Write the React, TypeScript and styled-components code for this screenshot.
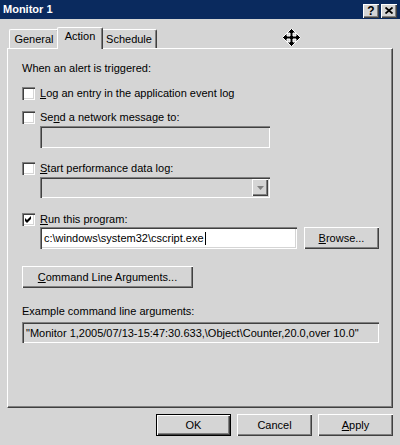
import React from "react";
import styled, { createGlobalStyle, css } from "styled-components";

const face = "#d5d5d5";
const shadow = "#808080";
const darkShadow = "#404040";
const light = "#ffffff";

const GlobalStyle = createGlobalStyle`
  html, body {
    margin: 0;
    padding: 0;
    background: ${face};
  }
  body {
    font-family: "Liberation Sans", Arial, sans-serif;
    font-size: 11px;
    color: #000;
  }
`;

const raised = css`
  box-shadow: inset 1px 1px ${light}, inset -1px -1px ${darkShadow},
    inset -2px -2px ${shadow};
`;

const sunken = css`
  box-shadow: inset 1px 1px ${shadow}, inset 2px 2px ${darkShadow},
    inset -1px -1px ${light}, inset -2px -2px ${face};
`;

export default function App() {
  return (
    <Window>
      <GlobalStyle />
      <TitleBar>
        <Title>Monitor 1</Title>
        <TitleButtons>
          <TitleButton>?</TitleButton>
          <TitleButton>
            <svg width="8" height="7" viewBox="0 0 8 7">
              <path d="M0.5 0.5 L7.5 6.5 M7.5 0.5 L0.5 6.5" stroke="#000" strokeWidth="1.8" />
            </svg>
          </TitleButton>
        </TitleButtons>
      </TitleBar>

      <TabStrip>
        <Tab $w={50}>General</Tab>
        <Tab $w={42} $active>Action</Tab>
        <Tab $w={56}>Schedule</Tab>
      </TabStrip>

      <Panel>
        <Heading>When an alert is triggered:</Heading>

        <CheckRow $top={12}>
          <CheckBox />
          <Label><u>L</u>og an entry in the application event log</Label>
        </CheckRow>

        <CheckRow $top={11}>
          <CheckBox />
          <Label>Se<u>n</u>d a network message to:</Label>
        </CheckRow>
        <Field $w={230} $h={22} $top={2} $indent disabled />

        <CheckRow $top={14}>
          <CheckBox />
          <Label><u>S</u>tart performance data log:</Label>
        </CheckRow>
        <Combo>
          <ComboArrow>
            <svg width="7" height="4" viewBox="0 0 7 4">
              <path d="M0 0 H7 L3.5 4 Z" fill={shadow} />
            </svg>
          </ComboArrow>
        </Combo>

        <CheckRow $top={15}>
          <CheckBox>
            <svg width="7" height="7" viewBox="0 0 7 7">
              <path d="M0 2 L2 4 L6 0 L6 3 L2 7 L0 5 Z" fill="#000" />
            </svg>
          </CheckBox>
          <Label><u>R</u>un this program:</Label>
        </CheckRow>
        <ProgramRow>
          <Field $w={257} $h={22}>
            c:\windows\system32\cscript.exe<Caret />
          </Field>
          <Button $w={75}><u>B</u>rowse...</Button>
        </ProgramRow>

        <CommandButton $w={171}>
          <u>C</u>ommand Line Arguments...
        </CommandButton>

        <ExampleLabel>Example command line arguments:</ExampleLabel>
        <Field $w={357} $h={21} $top={4} disabled>
          "Monitor 1,2005/07/13-15:47:30.633,\Object\Counter,20.0,over 10.0"
        </Field>
      </Panel>

      <ButtonBar>
        <Button $w={75} $default>OK</Button>
        <Button $w={75}>Cancel</Button>
        <Button $w={75}><u>A</u>pply</Button>
      </ButtonBar>

      <MoveCursor width="19" height="19" viewBox="0 0 19 19">
        <path
          d="M9.5 0.5 L14 5 H11 V8 H14 V5 L18.5 9.5 L14 14 V11 H11 V14 H14 L9.5 18.5 L5 14 H8 V11 H5 V14 L0.5 9.5 L5 5 V8 H8 V5 H5 Z"
          fill="#000"
          stroke="#fff"
          strokeWidth="1"
          strokeLinejoin="miter"
        />
      </MoveCursor>
    </Window>
  );
}

const Window = styled.div`
  position: relative;
  width: 400px;
  height: 445px;
  overflow: hidden;
  background: ${face};
  display: flex;
  flex-direction: column;
`;

const TitleBar = styled.div`
  height: 19px;
  background: #0a2a5e;
  display: flex;
  align-items: center;
  justify-content: space-between;
  padding: 0 3px 0 3px;
`;

const Title = styled.div`
  color: #fff;
  font-weight: bold;
  font-size: 11px;
  line-height: 13px;
`;

const TitleButtons = styled.div`
  display: flex;
  gap: 2px;
  margin-top: 3px;
`;

const TitleButton = styled.div`
  width: 16px;
  height: 14px;
  background: ${face};
  ${raised};
  display: flex;
  align-items: center;
  justify-content: center;
  font-weight: bold;
  font-size: 12px;
  line-height: 14px;
  padding-bottom: 1px;
  box-sizing: border-box;
`;

const TabStrip = styled.div`
  display: flex;
  align-items: flex-end;
  height: 21px;
  margin-top: 8px;
  padding-left: 9px;
`;

const Tab = styled.div<{ $w: number; $active?: boolean }>`
  box-sizing: border-box;
  width: ${(p) => p.$w + (p.$active ? 4 : 0)}px;
  height: ${(p) => (p.$active ? 22 : 19)}px;
  margin: 0 ${(p) => (p.$active ? -2 : 0)}px ${(p) => (p.$active ? -1 : 0)}px;
  position: relative;
  z-index: ${(p) => (p.$active ? 1 : 0)};
  background: ${face};
  border-top: 1px solid ${light};
  border-left: 1px solid ${light};
  border-right: 1px solid ${darkShadow};
  border-radius: 2px 2px 0 0;
  box-shadow: inset -1px 0 ${shadow};
  padding-top: ${(p) => (p.$active ? 2 : 3)}px;
  line-height: 13px;
  text-align: center;
`;

const Panel = styled.div`
  box-sizing: border-box;
  margin: 0 7px;
  height: 360px;
  border-top: 1px solid ${light};
  border-left: 1px solid ${light};
  border-right: 1px solid ${darkShadow};
  border-bottom: 1px solid ${darkShadow};
  box-shadow: inset -1px -1px ${shadow};
  padding: 13px 0 0 14px;
  display: flex;
  flex-direction: column;
  align-items: flex-start;
`;

const Heading = styled.div`
  line-height: 13px;
`;

const CheckRow = styled.div<{ $top: number }>`
  display: flex;
  align-items: center;
  height: 13px;
  margin-top: ${(p) => p.$top}px;
`;

const CheckBox = styled.div`
  width: 13px;
  height: 13px;
  background: #fff;
  ${sunken};
  display: flex;
  align-items: center;
  justify-content: center;
  margin-right: 5px;
`;

const Label = styled.span`
  line-height: 13px;
  white-space: nowrap;
`;

const Field = styled.div<{
  $w: number;
  $h: number;
  $top?: number;
  $indent?: boolean;
  disabled?: boolean;
}>`
  box-sizing: border-box;
  width: ${(p) => p.$w}px;
  height: ${(p) => p.$h}px;
  margin-top: ${(p) => p.$top ?? 0}px;
  margin-left: ${(p) => (p.$indent ? 18 : 0)}px;
  background: ${(p) => (p.disabled ? face : "#fff")};
  ${sunken};
  padding: 0 4px;
  display: flex;
  align-items: center;
  white-space: nowrap;
  overflow: hidden;
`;

const Caret = styled.span`
  display: inline-block;
  width: 1px;
  height: 13px;
  background: #000;
  margin-left: 1px;
`;

const Combo = styled.div`
  box-sizing: border-box;
  width: 230px;
  height: 21px;
  margin: 2px 0 0 18px;
  background: ${face};
  ${sunken};
  display: flex;
  justify-content: flex-end;
  align-items: center;
  padding-right: 2px;
`;

const ComboArrow = styled.div`
  width: 16px;
  height: 17px;
  background: ${face};
  ${raised};
  display: flex;
  align-items: center;
  justify-content: center;
`;

const ProgramRow = styled.div`
  display: flex;
  gap: 7px;
  margin: 1px 0 0 18px;
`;

const Button = styled.div<{ $w: number; $default?: boolean }>`
  box-sizing: border-box;
  width: ${(p) => p.$w}px;
  height: 22px;
  background: ${face};
  ${raised};
  display: flex;
  align-items: center;
  justify-content: center;
  line-height: 13px;
  white-space: nowrap;
  ${(p) =>
    p.$default &&
    css`
      outline: 1px solid #000;
      outline-offset: -1px;
      box-shadow: inset 2px 2px ${light}, inset -2px -2px ${darkShadow},
        inset -3px -3px ${shadow};
    `}
`;

const CommandButton = styled(Button)`
  margin-top: 17px;
`;

const ExampleLabel = styled.div`
  line-height: 13px;
  margin-top: 17px;
`;

const ButtonBar = styled.div`
  display: flex;
  justify-content: flex-end;
  gap: 6px;
  margin: 6px 7px 0 0;
`;

const MoveCursor = styled.svg`
  position: absolute;
  left: 282px;
  top: 28px;
`;
